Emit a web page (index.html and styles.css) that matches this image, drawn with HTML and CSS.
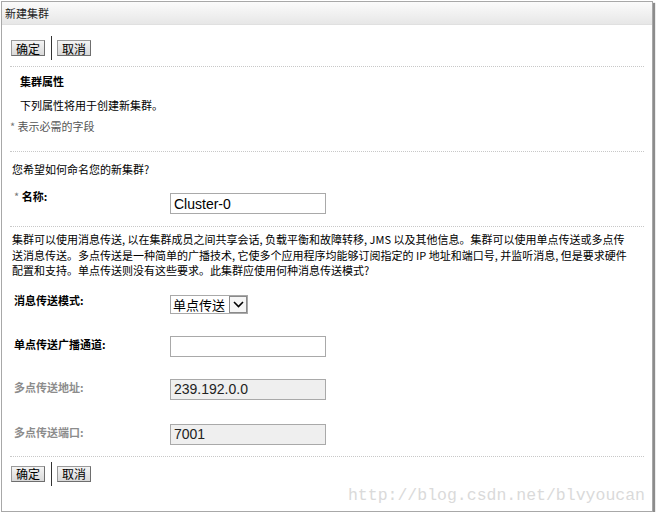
FILE: index.html
```html
<!DOCTYPE html>
<html lang="zh-CN">
<head>
    <meta charset="UTF-8">
    <title>新建集群</title>
    <link rel="stylesheet" href="styles.css">
</head>
<body>
    <div class="window">
        <div class="titlebar">新建集群</div>
        <div class="content">
            <div class="toolbar">
                <button class="btn">确定</button>
                <span class="sep"></span>
                <button class="btn">取消</button>
            </div>
            <div class="rule"></div>

            <div class="section-title">集群属性</div>
            <div class="intro">下列属性将用于创建新集群。</div>
            <div class="required"><span class="star">*</span> 表示必需的字段</div>
            <div class="rule rule-wide"></div>

            <div class="question">您希望如何命名您的新集群?</div>
            <div class="row row-name">
                <label class="label"><span class="star">*</span> 名称:</label>
                <input class="field" type="text" value="Cluster-0">
            </div>
            <div class="rule rule-name"></div>

            <p class="desc">集群可以使用消息传送, 以在集群成员之间共享会话, 负载平衡和故障转移, JMS 以及其他信息。集群可以使用单点传送或多点传<br>送消息传送。多点传送是一种简单的广播技术, 它使多个应用程序均能够订阅指定的 IP 地址和端口号, 并监听消息, 但是要求硬件<br>配置和支持。单点传送则没有这些要求。此集群应使用何种消息传送模式?</p>

            <div class="row row-mode">
                <label class="label">消息传送模式:</label>
                <div class="select">
                    <span class="select-text">单点传送</span>
                    <span class="select-arrow">
                        <svg width="11" height="7" viewBox="0 0 11 7"><path d="M1 1 L5.5 5.5 L10 1" fill="none" stroke="#000" stroke-width="1.6"/></svg>
                    </span>
                </div>
            </div>
            <div class="row">
                <label class="label">单点传送广播通道:</label>
                <input class="field" type="text" value="">
            </div>
            <div class="row">
                <label class="label label-off">多点传送地址:</label>
                <input class="field" type="text" value="239.192.0.0" disabled>
            </div>
            <div class="row row-port">
                <label class="label label-off">多点传送端口:</label>
                <input class="field" type="text" value="7001" disabled>
            </div>
            <div class="rule rule-bottom"></div>

            <div class="toolbar toolbar-bottom">
                <button class="btn">确定</button>
                <span class="sep"></span>
                <button class="btn">取消</button>
            </div>
        </div>
        <div class="watermark">http://blog.csdn.net/blvyoucan</div>
    </div>
</body>
</html>
```

FILE: styles.css
```css
body, html {
    margin: 0;
    padding: 0;
    background: #fff;
    font-family: "Noto Sans CJK SC", "Liberation Sans", sans-serif;
    font-size: 11px;
    color: #000;
}
.window {
    position: relative;
    box-sizing: border-box;
    margin: 1px 0 0 1px;
    width: 652px;
    height: 511px;
    border: 1px solid #a8a8a8;
    box-shadow: 2px 2px 1px #8c8c8c;
    background: #fff;
}
.titlebar {
    height: 22px;
    line-height: 22px;
    padding-left: 3px;
    background: linear-gradient(#fbfbfb, #e7e7e7);
    border-bottom: 1px solid #e0e0e0;
    color: #222;
}
.content {
    padding: 0 8px;
}
.toolbar {
    display: flex;
    align-items: center;
    height: 24px;
    margin-top: 11px;
    padding-left: 1px;
}
.toolbar-bottom {
    margin-top: 5px;
}
.btn {
    box-sizing: border-box;
    height: 16px;
    padding: 0 4px;
    margin: 0;
    font-family: inherit;
    font-size: 12px;
    line-height: 13px;
    color: #000;
    background: linear-gradient(#f4f4f4, #d9d9d9);
    border: 1px solid #9a9a9a;
    border-right-color: #6e6e6e;
    border-bottom-color: #6e6e6e;
    border-radius: 0;
}
.sep {
    width: 1px;
    height: 24px;
    background: #333;
    margin: 0 5px 0 6px;
}
.rule {
    border-top: 1px dotted #c8c8c8;
    margin-top: 6px;
}
.section-title {
    font-weight: bold;
    line-height: 16px;
    margin-top: 6px;
    padding-left: 10px;
}
.intro {
    line-height: 16px;
    margin-top: 8px;
    padding-left: 10px;
}
.required {
    line-height: 16px;
    margin-top: 5px;
    color: #555;
}
.star {
    color: #777;
    font-weight: normal;
}
.rule-wide {
    margin-top: 17px;
}
.question {
    line-height: 16px;
    margin-top: 9px;
    padding-left: 2px;
}
.row {
    display: grid;
    grid-template-columns: 160px 160px;
    align-items: start;
    margin-top: 22px;
}
.row-name {
    margin-top: 16px;
}
.row-mode {
    margin-top: 16px;
}
.row-port {
    margin-top: 24px;
}
.label {
    font-weight: bold;
    line-height: 14px;
    padding-left: 4px;
    padding-top: 1px;
}
.row-name .label {
    margin-top: -5px;
}
.row-mode .label {
    margin-top: -3px;
}
.label-off {
    color: #8c8c8c;
}
.field {
    box-sizing: border-box;
    width: 156px;
    height: 21px;
    margin: 0;
    padding: 0 3px;
    border: 1px solid #a9a9a9;
    font-family: "Liberation Sans", Arial, sans-serif;
    font-size: 14px;
    color: #000;
    background: #fff;
}
.field:disabled {
    background: #efefef;
    color: #222;
}
.rule-name {
    margin-top: 12px;
}
.desc {
    margin: 5px 0 0;
    padding-left: 2px;
    line-height: 15.5px;
}
.select {
    display: flex;
    align-items: center;
    box-sizing: border-box;
    width: 78px;
    height: 19px;
    border: 1px solid #a9a9a9;
}
.select-text {
    flex: 1;
    font-size: 13px;
    line-height: 17px;
    padding-left: 2px;
    white-space: nowrap;
}
.select-arrow {
    box-sizing: border-box;
    align-self: stretch;
    width: 18px;
    flex: none;
    display: flex;
    align-items: center;
    justify-content: center;
    border: 1px solid #8a8a8a;
    background: #f6f6f6;
}
.rule-bottom {
    margin-top: 11px;
}
.watermark {
    position: absolute;
    right: 7px;
    bottom: 6px;
    font-family: "Liberation Mono", monospace;
    font-size: 16.5px;
    color: #dadada;
}
```
